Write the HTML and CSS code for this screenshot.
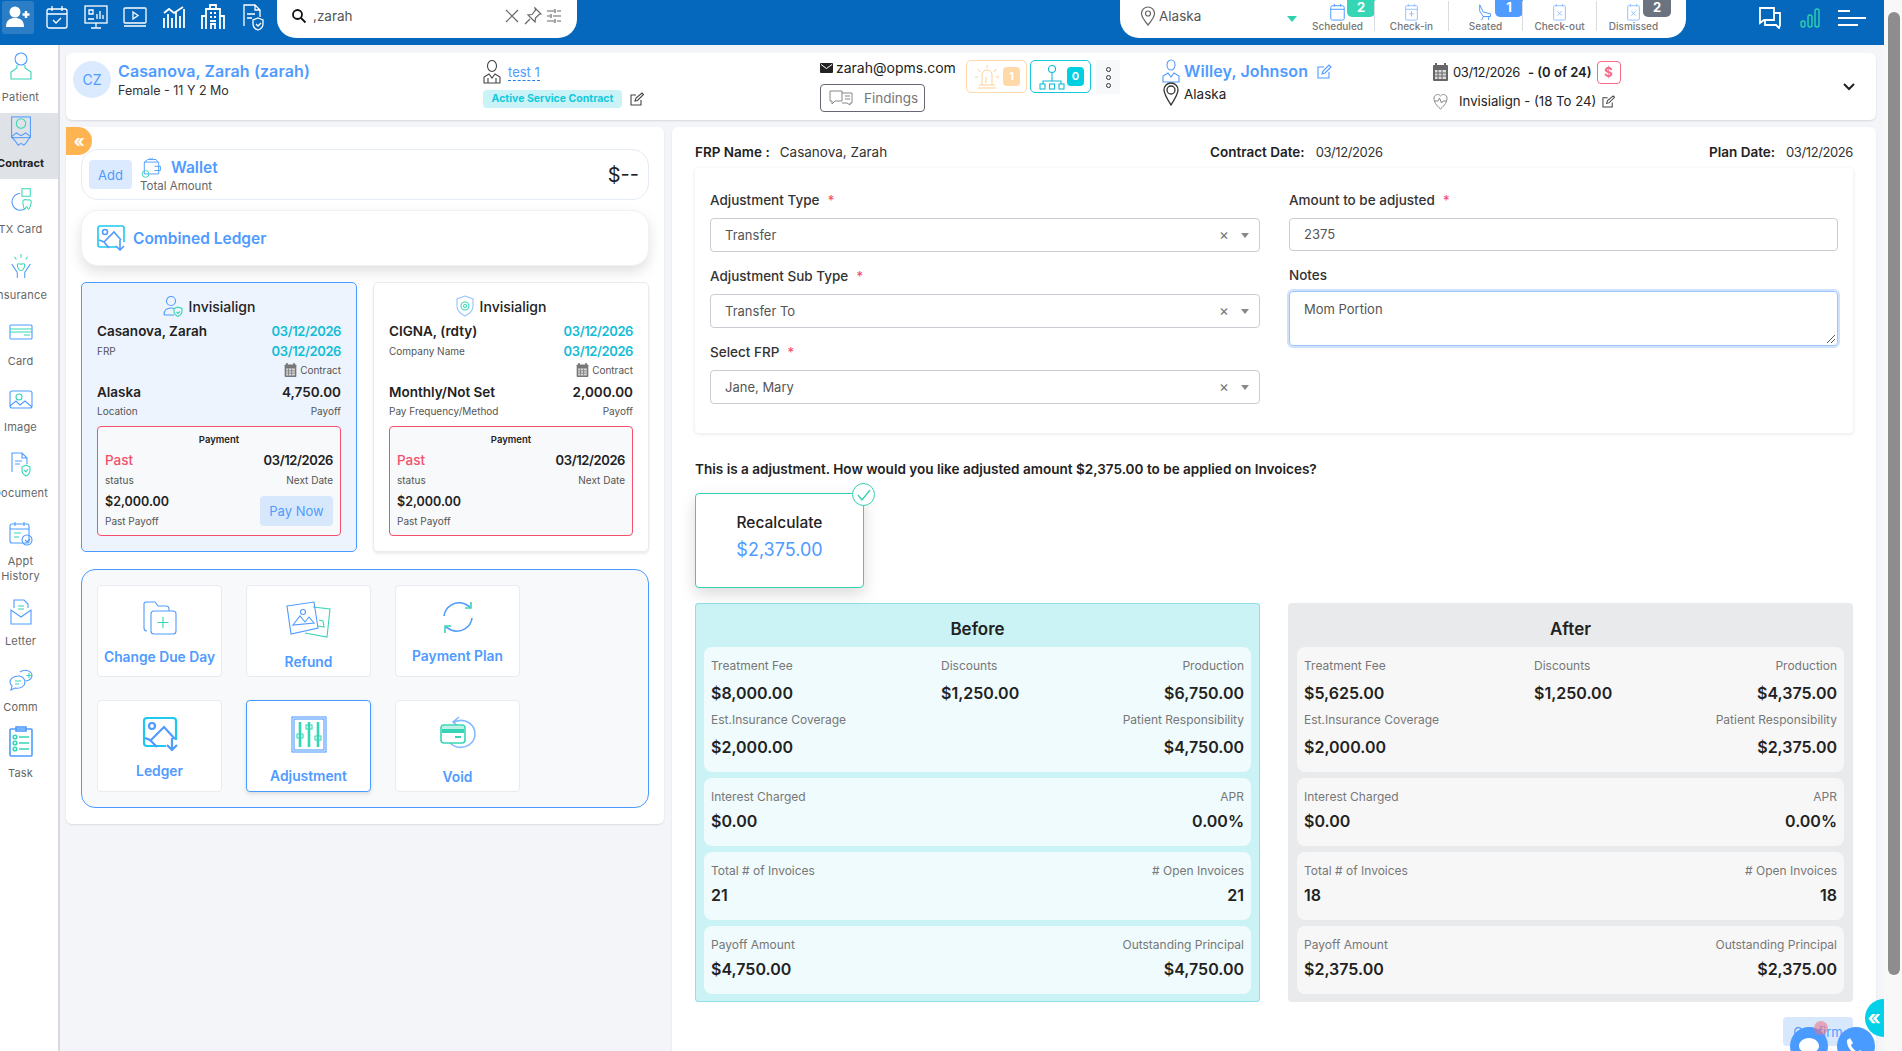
FILE: index.html
```html
<!DOCTYPE html>
<html lang="en">
<head>
<meta charset="utf-8">
<title>Contract Adjustment</title>
<link rel="stylesheet" href="styles.css">
</head>
<body>
<div class="page">
<div class="app">
  <header class="topbar">
    <nav class="quick">
      <a class="quick-btn is-on"><svg width="26" height="24" viewBox="0 0 26 24"><circle cx="10" cy="7" r="5.500" fill="#fff"/><path d="M1 22c0-7 4-9 9-9s9 2 9 9z" fill="#fff"/><path d="M21 6v7M17.500 9.500h7" stroke="#fff" stroke-width="2.400"/></svg></a>
      <a class="quick-btn"><svg width="24" height="24" viewBox="0 0 24 24" class="w"><rect x="2" y="4" width="20" height="19" rx="2"/><path d="M2 9h20M7 1v5M17 1v5M8 15l3 3 5-5"/></svg></a>
      <a class="quick-btn"><svg width="26" height="26" viewBox="0 0 26 26" class="w"><rect x="2" y="2" width="22" height="17"/><path d="M13 19v4M8 24h10M5 15h6M14 15v-5M17 15V7M20 15v-4M6 6h4v4H6z"/></svg></a>
      <a class="quick-btn"><svg width="26" height="24" viewBox="0 0 26 24" class="w"><rect x="2" y="3" width="22" height="15" rx="1"/><path d="M11 7l5 3.500-5 3.500zM2 21h22"/></svg></a>
      <a class="quick-btn"><svg width="24" height="24" viewBox="0 0 24 24" class="w w2"><path d="M2 23V13M6 23V9M10 23V13M14 23V7M18 23V11M22 23V4M2 8l5-4 5 4 9-6"/></svg></a>
      <a class="quick-btn"><svg width="24" height="26" viewBox="0 0 24 26" class="w w2"><path d="M5 25V5h14v20M1 25V12h4M23 25V12h-4M9 9h2M13 9h2M9 13h2M13 13h2M9 17h6M10 25v-5h4v5M9 1h6v4H9z"/></svg></a>
      <a class="quick-btn"><svg width="22" height="28" viewBox="0 0 22 28" class="w"><path d="M2 23V2h11l5 5v7M13 2v5h5M5 11h8M5 15h5"/><path d="M16 15l5 2v4c0 3-2 5-5 6-3-1-5-3-5-6v-4zM14 21l2 2 3-3"/></svg></a>
    </nav>
    <div class="search">
      <svg width="16" height="16" viewBox="0 0 16 16" class="k"><circle cx="6.500" cy="6.500" r="4.500"/><path d="M10 10l4.500 4.500"/></svg>
      <span class="search-text">,zarah</span>
      <svg width="16" height="16" viewBox="0 0 16 16" class="g"><path d="M2 2l12 12M14 2L2 14"/></svg>
      <svg width="18" height="18" viewBox="0 0 18 18" class="g"><path d="M11 1l6 6-2 .5-3.500 3.500-.5 4-7-7 4-.5L11.500 3zM6 12l-5 5"/></svg>
      <svg width="16" height="16" viewBox="0 0 16 16" class="g"><path d="M1 3h7M11 3h4M1 8h3M7 8h8M1 13h7M11 13h4M9 1v4M5 6v4M9 11v4"/></svg>
    </div>
    <div class="status-pill">
      <svg class="loc-pin g" width="16" height="20" viewBox="0 0 16 20"><path d="M8 19C3 13 1.500 10 1.500 7.500a6.500 6.500 0 0 1 13 0C14.500 10 13 13 8 19z"/><circle cx="8" cy="7.500" r="2.500"/></svg>
      <span class="loc">Alaska</span>
      <span class="caret"></span>
      <div class="stat stat-first"><svg width="17" height="18" viewBox="0 0 17 20" class="sb"><rect x="1" y="3" width="15" height="16" rx="2"/><path d="M1 7h15M5 1v3M12 1v3"/></svg><span>Scheduled</span><b class="badge bg-teal">2</b></div>
      <div class="stat"><svg width="17" height="18" viewBox="0 0 17 20" class="sb fade"><rect x="2" y="3" width="13" height="16" rx="1"/><path d="M2 7h13M5 1v3M12 1v3M8.500 9v6M6 12h5"/></svg><span>Check-in</span></div>
      <div class="stat"><svg width="20" height="18" viewBox="0 0 20 20" class="sb"><path d="M3 2l4 8 8 2v3H7L3 9zM7 15l-2 4M13 15v4"/></svg><span>Seated</span><b class="badge bg-blue">1</b></div>
      <div class="stat"><svg width="17" height="18" viewBox="0 0 17 20" class="sb fade"><rect x="2" y="3" width="13" height="16" rx="1"/><path d="M5 1v3M12 1v3M6 9l5 5M11 9l-5 5"/></svg><span>Check-out</span></div>
      <div class="stat"><svg width="17" height="18" viewBox="0 0 17 20" class="sb fade"><rect x="2" y="3" width="13" height="16" rx="1"/><path d="M5 1v3M12 1v3M6 9l5 5M11 9l-5 5"/></svg><span>Dismissed</span><b class="badge bg-gray">2</b></div>
    </div>
    <div class="top-tools">
      <svg width="24" height="22" viewBox="0 0 24 22" class="w w2"><path d="M2 1h14v12H6l-4 3z"/><path d="M16 6h6v12l-1 3-3-3H7v-5"/></svg>
      <svg width="20" height="20" viewBox="0 0 20 20" class="bars"><rect x="1" y="13" width="4" height="6" rx="2"/><rect x="8" y="7" width="4" height="12" rx="2"/><rect x="15" y="1" width="4" height="18" rx="2"/></svg>
      <svg width="28" height="18" viewBox="0 0 28 18" class="w w2"><path d="M0 2h12M0 9h28M0 16h20"/></svg>
    </div>
  </header>

  <div class="body">
    <aside class="sidebar">
      <a class="side"><svg width="24" height="30" viewBox="0 0 24 30" class="sb"><circle cx="12" cy="8" r="6"/><path d="M8 14v3l-6 4v7h20v-7l-6-4v-3" class="st"/></svg><span>Patient</span></a>
      <a class="side is-on"><svg width="24" height="32" viewBox="0 0 24 34" class="sb"><rect x="2" y="1" width="20" height="22"/><circle cx="12" cy="8" r="5" class="st"/><path d="M2 22l5-4 5 3 5-3 5 4-5 7-2 2-3-2-3 2-2-3z"/></svg><b>Contract</b></a>
      <a class="side"><svg width="24" height="26" viewBox="0 0 24 28" class="sb"><path d="M11 7a9 9 0 1 0 6 16" /><path d="M13 2h9v8h-9z" class="st"/><path d="M15 14c2-1 3 0 4 0s4-1 4 2-2 8-3 8-1-3-2-3-1 3-2 3-2-6-2-8 1-2 1-2z" class="st"/></svg><span>TX Card</span></a>
      <a class="side"><svg width="24" height="26" viewBox="0 0 24 28" class="sb"><path d="M2 12l6 9v6M22 12l-6 9v6"/><path d="M8 12c2-1 3 0 4 0s2-1 4 0c0 4-2 7-4 7s-4-3-4-7z" class="st"/><path d="M12 1v4M5 4l2 3M19 4l-2 3" class="st"/></svg><span>Insurance</span></a>
      <a class="side side-card"><svg width="24" height="16" viewBox="0 0 24 16" class="sb"><rect x="1" y="1" width="22" height="14" rx="1"/><path d="M1 5h22M1 8h22M15 11h6" class="st"/></svg><span>Card</span></a>
      <a class="side side-image"><svg width="24" height="19" viewBox="0 0 24 19" class="sb"><rect x="1" y="1" width="22" height="17" rx="2"/><circle cx="10" cy="7" r="3" class="st"/><path d="M1 16l6-5 4 4 5-4 7 6"/></svg><span>Image</span></a>
      <a class="side"><svg width="20" height="25" viewBox="0 0 20 25" class="sb"><path d="M1 20V1h10l5 5v6M11 1v5h5"/><path d="M4 9h7M4 12h5"/><path d="M15 13l4 2v3c0 3-2 5-4 6-2-1-4-3-4-6v-3zM13 18l2 2 2-3" class="st"/></svg><span>Document</span></a>
      <a class="side side-tall"><svg width="24" height="25" viewBox="0 0 24 25" class="sb"><rect x="1" y="3" width="19" height="19" rx="2"/><path d="M1 8h19M6 1v4M15 1v4"/><path d="M5 12h7M5 16h5" class="st"/><circle cx="18" cy="19" r="5"/><path d="M16 19l2 2 3-3"/></svg><span>Appt<br>History</span></a>
      <a class="side"><svg width="22" height="26" viewBox="0 0 22 26" class="sb"><path d="M1 11v14h20V11L11 18zM4 9V1h10l4 4v4"/><path d="M8 7h6M8 10h6" class="st"/></svg><span>Letter</span></a>
      <a class="side"><svg width="24" height="22" viewBox="0 0 24 22" class="sb"><path d="M10 7C4 7 1 10 1 13c0 2 1 3 2 4l-1 4 4-2c6 1 10-2 10-6 0-3-3-6-6-6z"/><path d="M11 3c4-3 11-2 12 3 0 2-1 4-3 5l-3 1"/><path d="M6 12h6M6 15h4M20 4v5M17.500 6.500h5" class="st"/></svg><span>Comm</span></a>
      <a class="side"><svg width="24" height="31" viewBox="0 0 24 31" class="sb sb2"><rect x="1" y="3" width="22" height="27" rx="1"/><rect x="7" y="1" width="10" height="4"/><circle cx="6" cy="11" r="1.800" class="st"/><circle cx="6" cy="17" r="1.800" class="st"/><circle cx="6" cy="23" r="1.800" class="st"/><path d="M10 11h10M10 17h10M10 23h10" class="st"/></svg><span>Task</span></a>
    </aside>

    <main class="main">
      <section class="patient">
        <div class="who">
          <div class="avatar">CZ</div>
          <div>
            <div class="name">Casanova, Zarah (zarah)</div>
            <div class="sub">Female - 11 Y 2 Mo</div>
          </div>
        </div>
        <div class="doctor">
          <div class="doc-top"><svg width="18" height="24" viewBox="0 0 18 24" class="d"><ellipse cx="9" cy="6" rx="4.500" ry="5.500"/><path d="M1 23v-6l5-3 3 4 3-4 5 3v6zM5 18v5M13 18v5"/></svg><a class="test">test 1</a></div>
          <div class="doc-bottom"><span class="service">Active Service Contract</span><svg width="14" height="14" viewBox="0 0 14 14" class="d"><path d="M11 8v5H1V3h5M5 9l1-3 6-5 1.500 1.500-6 6z"/></svg></div>
        </div>
        <div class="contact">
          <div class="mail"><svg width="13" height="10" viewBox="0 0 13 10"><rect width="13" height="10" rx="1" fill="#222"/><path d="M1 1.500l5.500 4 5.500-4" stroke="#fff" fill="none"/></svg>zarah@opms.com</div>
          <button class="findings"><svg width="24" height="16" viewBox="0 0 24 16" class="g2"><path d="M1 1h12v10H6l-3 3v-3H1zM13 3h10v10h-2v2l-3-2h-5M16 6h5M16 9h5"/></svg>Findings</button>
        </div>
        <div class="alerts">
          <div class="alert alert-o"><svg width="24" height="28" viewBox="0 0 24 28" class="o"><path d="M7 22V12a5 5 0 0 1 10 0v10M3 25h18M4 22h16M12 2v3M3 6l2 3M21 6l-2 3M0 14h3M21 14h3M11 14v6"/></svg><b>1</b></div>
          <div class="alert alert-t"><svg width="26" height="26" viewBox="0 0 26 26" class="c"><circle cx="13" cy="5" r="3.500"/><path d="M13 9v8M4 20v-3h18v3"/><rect x="1" y="20" width="5" height="5"/><rect x="10.500" y="20" width="5" height="5"/><rect x="20" y="20" width="5" height="5"/></svg><b>0</b></div>
          <button class="dots"><i></i><i></i><i></i></button>
        </div>
        <div class="provider">
          <div class="prov-row"><svg width="18" height="24" viewBox="0 0 18 24" class="sb"><ellipse cx="9" cy="6" rx="4" ry="5"/><path d="M1 23v-6l5-3 3 4 3-4 5 3v6z"/></svg><span class="name">Willey, Johnson</span><svg class="prov-edit sb" width="15" height="15" viewBox="0 0 15 15"><path d="M12 8v6H1V3h6M5 10l1-3 6-6 2 2-6 6z"/></svg></div>
          <div class="prov-row prov-loc"><svg width="18" height="24" viewBox="0 0 18 24" class="k2"><path d="M9 23C4 15 2 12 2 8a7 7 0 0 1 14 0c0 4-2 7-7 15z"/><circle cx="9" cy="8" r="4"/></svg><span>Alaska</span></div>
        </div>
        <div class="plan">
          <div class="plan-row"><svg width="15" height="18" viewBox="0 0 15 18"><rect y="2" width="15" height="16" rx="1" fill="#666"/><rect x="2" y="7" width="11" height="9" fill="#ddd"/><path d="M3 0v3M12 0v3" stroke="#666" stroke-width="2"/><path d="M5 7v9M9 7v9M2 10h11M2 13h11" stroke="#666"/></svg><span class="date">03/12/2026</span><b>- (0 of 24)</b><span class="dollar">$</span></div>
          <div class="plan-row plan-row2"><svg width="15" height="18" viewBox="0 0 15 18" class="g2"><path d="M7.500 17C3 13 1 10 1 6c0-3 4-5 6.500-2C10 1 14 3 14 6c0 4-2 7-6.500 11zM1 9h4l1.500-3 2 5L10 9h4"/></svg><span class="plan-name">Invisialign - (18 To 24)</span><svg width="13" height="13" viewBox="0 0 14 14" class="d"><path d="M11 8v5H1V3h5M5 9l1-3 6-5 1.500 1.500-6 6z"/></svg></div>
        </div>
        <svg class="chev" width="12" height="8" viewBox="0 0 12 8"><path d="M1 1l5 5 5-5" fill="none" stroke="#222" stroke-width="2"/></svg>
      </section>

      <div class="columns">
        <section class="left">
          <button class="collapse">«</button>
          <div class="wallet">
            <button class="add">Add</button>
            <div class="wallet-text">
              <div class="wallet-top"><svg width="23" height="22" viewBox="0 0 23 26" class="sb"><path d="M3 6h17v14H3zM3 6l4-3h10l2 3M15 11h7v5h-7M9 1l2 2 2-2"/><circle cx="4.500" cy="20" r="4" class="st"/></svg><span class="wallet-title">Wallet</span></div>
              <div class="wallet-sub">Total Amount</div>
            </div>
            <div class="wallet-amt">$--</div>
          </div>
          <div class="combined">
            <svg width="28" height="26" viewBox="0 0 28 26" class="sb sb2"><path d="M20 22H3a2 2 0 0 1-2-2V3a2 2 0 0 1 2-2h22a2 2 0 0 1 2 2v14" class="cy"/><circle cx="8" cy="7" r="2.500"/><path d="M2 15l5 2 5 6M7 17l10-10 7 8M23 15v10M19 21l4 4 4-4"/></svg>
            <span>Combined Ledger</span>
          </div>
          <div class="cards">
            <article class="card card-active">
              <h3 class="card-head"><svg width="20" height="22" viewBox="0 0 20 22" class="sb"><circle cx="8" cy="6" r="4.500"/><path d="M1 20c0-5 3-7 7-7 1 0 2 0 3 .5M1 20h10"/><path d="M15 12l4 1.500v3c0 2-2 4-4 5-2-1-4-3-4-5v-3zM13.500 17l1.500 1.500 2-2" class="st"/></svg>Invisialign</h3>
              <div class="line"><b class="big">Casanova, Zarah</b><b class="tdate">03/12/2026</b></div>
              <div class="line"><span class="tiny">FRP</span><b class="tdate">03/12/2026</b></div>
              <div class="line line-c"><span></span><span class="tiny contract-tag"><svg width="13" height="14" viewBox="0 0 15 18"><rect y="2" width="15" height="16" rx="1" fill="#777"/><rect x="2" y="7" width="11" height="9" fill="#ddd"/><path d="M3 0v3M12 0v3" stroke="#777" stroke-width="2"/><path d="M5 7v9M9 7v9M2 10h11M2 13h11" stroke="#777"/></svg>Contract</span></div>
              <div class="line line-d"><b class="big">Alaska</b><b class="big">4,750.00</b></div>
              <div class="line line-e"><span class="tiny">Location</span><span class="tiny">Payoff</span></div>
              <div class="pay">
                <div class="pay-title">Payment</div>
                <div class="line"><b class="past">Past</b><b class="big pdate">03/12/2026</b></div>
                <div class="line line-s"><span class="tiny">status</span><span class="tiny">Next Date</span></div>
                <div class="pay-foot">
                  <div><div class="amt">$2,000.00</div><div class="tiny">Past Payoff</div></div>
                  <button class="paynow">Pay Now</button>
                </div>
              </div>
            </article>
            <article class="card">
              <h3 class="card-head"><svg width="18" height="22" viewBox="0 0 18 22" class="sb"><path d="M9 1l8 3v7c0 5-4 8-8 10-4-2-8-5-8-10V4z" opacity=".6"/><circle cx="9" cy="11" r="4" class="st"/><circle cx="9" cy="11" r="1.500" class="st"/></svg>Invisialign</h3>
              <div class="line"><b class="big">CIGNA, (rdty)</b><b class="tdate">03/12/2026</b></div>
              <div class="line"><span class="tiny">Company Name</span><b class="tdate">03/12/2026</b></div>
              <div class="line line-c"><span></span><span class="tiny contract-tag"><svg width="13" height="14" viewBox="0 0 15 18"><rect y="2" width="15" height="16" rx="1" fill="#777"/><rect x="2" y="7" width="11" height="9" fill="#ddd"/><path d="M3 0v3M12 0v3" stroke="#777" stroke-width="2"/><path d="M5 7v9M9 7v9M2 10h11M2 13h11" stroke="#777"/></svg>Contract</span></div>
              <div class="line line-d"><b class="big">Monthly/Not Set</b><b class="big">2,000.00</b></div>
              <div class="line line-e"><span class="tiny">Pay Frequency/Method</span><span class="tiny">Payoff</span></div>
              <div class="pay">
                <div class="pay-title">Payment</div>
                <div class="line"><b class="past">Past</b><b class="big pdate">03/12/2026</b></div>
                <div class="line line-s"><span class="tiny">status</span><span class="tiny">Next Date</span></div>
                <div class="pay-foot">
                  <div><div class="amt">$2,000.00</div><div class="tiny">Past Payoff</div></div>
                </div>
              </div>
            </article>
          </div>
          <div class="actions">
            <a class="tile"><svg class="sb m12" width="34" height="34" viewBox="0 0 34 34"><path d="M4 30a3 3 0 0 1-3-3V3a2 2 0 0 1 2-2h9l3 4h8a3 3 0 0 1 3 3v2"/><rect x="8" y="10" width="25" height="23" rx="3"/><path d="M20 16v11M14.500 21.500h11" class="st"/></svg><span>Change Due Day</span></a>
            <a class="tile"><svg class="sb m14" width="45" height="37" viewBox="0 0 45 37"><path d="M27 6l17 2-3 28-22-4" class="st"/><path d="M1 5l27-4 4 26-27 6z"/><path d="M7 24l7-9 5 6 4-5 5 6z"/><circle cx="17" cy="11" r="2.500"/><path d="M33 19l4 1 1 6-6-1" class="st"/></svg><span>Refund</span></a>
            <a class="tile"><svg class="sb sb2 m12" width="34" height="33" viewBox="0 0 34 33"><path d="M3 15C4 6 14 -1 24 3l5 3"/><path d="M31 17c-1 9-11 16-21 12l-5-3"/><path d="M30 1v6h-6M4 32v-7h6" class="st"/></svg><span>Payment Plan</span></a>
            <a class="tile"><svg class="sb sb3 m10" width="36" height="35" viewBox="0 0 36 35"><path d="M24 30H5a3 3 0 0 1-3-3V5a3 3 0 0 1 3-3h26a3 3 0 0 1 3 3v19" class="cy"/><circle cx="10" cy="10" r="3"/><path d="M3 22l5 2 7 7M9 24l13-13 11 12M30 22v12M25 29l5 5 5-5"/></svg><span>Ledger</span></a>
            <a class="tile tile-on"><svg class="sb m13" width="36" height="37" viewBox="0 0 36 37"><rect x="1" y="1" width="34" height="35"/><rect x="3" y="3" width="30" height="31"/><path d="M9 6v25M18 6v25M27 6v25" class="st st3"/><path d="M6 18h6v4H6zM15 9h6v4h-6zM24 20h6v4h-6z" class="st"/></svg><span>Adjustment</span></a>
            <a class="tile"><svg class="sb sb2 m16" width="36" height="34" viewBox="0 0 36 34"><path d="M14 6c12-5 21 3 21 12 0 9-9 15-18 13-4-1-6-3-8-5" opacity=".7"/><path d="M19 1l-6 5 6 5" opacity=".7"/><rect x="1" y="9" width="24" height="18" rx="3" fill="#fff" class="st"/><rect x="2" y="13" width="22" height="4" fill="#38d3b6" stroke="none"/><rect x="2" y="10" width="22" height="3" fill="#bff0e6" stroke="none"/><rect x="15" y="20" width="6" height="2" fill="#38d3b6" stroke="none"/></svg><span>Void</span></a>
          </div>
        </section>

        <section class="right">
          <div class="meta">
            <div><b>FRP Name :</b><span class="frp">Casanova, Zarah</span></div>
            <div class="meta-mid"><b>Contract Date:</b><span class="date">03/12/2026</span></div>
            <div class="meta-end"><b>Plan Date:</b><span class="date">03/12/2026</span></div>
          </div>
          <div class="form">
            <div class="form-col">
              <div class="field">
                <label>Adjustment Type<i>*</i></label>
                <div class="select">Transfer<span class="x">×</span><span class="tri"></span></div>
              </div>
              <div class="field">
                <label>Adjustment Sub Type<i>*</i></label>
                <div class="select">Transfer To<span class="x">×</span><span class="tri"></span></div>
              </div>
              <div class="field">
                <label>Select FRP<i>*</i></label>
                <div class="select">Jane, Mary<span class="x">×</span><span class="tri"></span></div>
              </div>
            </div>
            <div class="form-col">
              <div class="field field-r">
                <label>Amount to be adjusted<i>*</i></label>
                <div class="input">2375</div>
              </div>
              <div class="field field-n">
                <label>Notes</label>
                <div class="textarea">Mom Portion<svg width="10" height="10" viewBox="0 0 10 10"><path d="M9 1L1 9M9 5L5 9" stroke="#555"/></svg></div>
              </div>
            </div>
          </div>
          <p class="question">This is a adjustment. How would you like adjusted amount $2,375.00 to be applied on Invoices?</p>
          <div class="recalc">
            <span class="check"><svg width="14" height="12" viewBox="0 0 14 12"><path d="M1 6l4 5 8-10" fill="none" stroke="#35d0b0" stroke-width="1.300"/></svg></span>
            <div class="recalc-t">Recalculate</div>
            <div class="recalc-v">$2,375.00</div>
          </div>
          <div class="compare">
            <div class="side-panel before">
              <h2>Before</h2>
              <div class="box box-main">
                <span class="lab">Treatment Fee</span><span class="lab">Discounts</span><span class="lab r">Production</span>
                <b class="val">$8,000.00</b><b class="val">$1,250.00</b><b class="val r">$6,750.00</b>
                <span class="lab">Est.Insurance Coverage</span><span></span><span class="lab r">Patient Responsibility</span>
                <b class="val">$2,000.00</b><span></span><b class="val r">$4,750.00</b>
              </div>
              <div class="box"><span class="lab">Interest Charged</span><span class="lab r">APR</span><b class="val">$0.00</b><b class="val r">0.00%</b></div>
              <div class="box"><span class="lab">Total # of Invoices</span><span class="lab r"># Open Invoices</span><b class="val">21</b><b class="val r">21</b></div>
              <div class="box"><span class="lab">Payoff Amount</span><span class="lab r">Outstanding Principal</span><b class="val">$4,750.00</b><b class="val r">$4,750.00</b></div>
            </div>
            <div class="side-panel after">
              <h2>After</h2>
              <div class="box box-main">
                <span class="lab">Treatment Fee</span><span class="lab">Discounts</span><span class="lab r">Production</span>
                <b class="val">$5,625.00</b><b class="val">$1,250.00</b><b class="val r">$4,375.00</b>
                <span class="lab">Est.Insurance Coverage</span><span></span><span class="lab r">Patient Responsibility</span>
                <b class="val">$2,000.00</b><span></span><b class="val r">$2,375.00</b>
              </div>
              <div class="box"><span class="lab">Interest Charged</span><span class="lab r">APR</span><b class="val">$0.00</b><b class="val r">0.00%</b></div>
              <div class="box"><span class="lab">Total # of Invoices</span><span class="lab r"># Open Invoices</span><b class="val">18</b><b class="val r">18</b></div>
              <div class="box"><span class="lab">Payoff Amount</span><span class="lab r">Outstanding Principal</span><b class="val">$2,375.00</b><b class="val r">$2,375.00</b></div>
            </div>
          </div>
          <div class="confirm-row"><button class="confirm">Confirm</button></div>
        </section>
      </div>
    </main>
    <button class="float-teal">«</button>
    <span class="float-chat"><svg width="24" height="22" viewBox="0 0 24 22"><path d="M12 2C6 2 2 6 2 10c0 2 1 4 3 5l-1 5 5-3h3c6 0 10-3 10-7s-4-8-10-8z" fill="#fff"/></svg></span>
    <span class="float-dot"></span>
    <span class="float-call"><svg width="22" height="22" viewBox="0 0 22 22"><path d="M5 2l3 5-2 2c1 3 4 6 7 7l2-2 5 3-2 3C10 21 1 12 2 4z" fill="#fff"/></svg></span>
  </div>
</div>
<div class="rail"><div class="thumb"></div></div>
</div>
</body>
</html>
```
FILE: styles.css
```css
* { box-sizing: border-box; }
html, body { margin: 0; height: 100%; overflow: hidden; }
body { font-family: Inter, "Liberation Sans", sans-serif; font-size: 13px; color: #222; background: #f4f5f9; }
svg { display: block; flex: none; fill: none; }
button { font: inherit; border: 0; padding: 0; }
h2, h3, p { margin: 0; }
.page { display: flex; height: 1051px; }
.app { width: 1884px; height: 1051px; display: flex; flex-direction: column; overflow: hidden; }
.rail { width: 18px; background: #f8f8f8; padding: 12px 2px 0 4px; }
.thumb { height: 963px; border-radius: 6px; background: #8d8d8d; }

.sb { stroke: #4f9bff; stroke-width: 1.100; }
.sb .st { stroke: #35d6b5; }
.sb .cy { stroke: #1dc9ef; }
.sb2 { stroke-width: 1.600; }
.sb3 { stroke-width: 2.200; }
.sb .st3 { stroke-width: 2.600; }
.fade { opacity: .6; }
.w { stroke: #fff; stroke-width: 1.300; }
.w2 { stroke-width: 1.800; }
.k { stroke: #111; stroke-width: 1.800; }
.g { stroke: #666; stroke-width: 1.200; }
.g2 { stroke: #888; stroke-width: 1; }
.d { stroke: #444; stroke-width: 1.100; }
.k2 { stroke: #333; stroke-width: 1.300; }
.o { stroke: #ffcf96; stroke-width: 1; }
.c { stroke: #14bcd6; stroke-width: 1.100; }
.bars { stroke: #2fd1ad; stroke-width: 1.400; }

/* top bar */
.topbar { height: 45px; flex: none; background: #0668bd; display: flex; align-items: flex-start; }
.quick { width: 277px; height: 34px; padding-left: 2px; display: flex; align-items: center; }
.quick-btn { width: 39.200px; height: 33px; display: flex; align-items: center; justify-content: center; border-radius: 3px; }
.quick-btn.is-on { width: 32px; margin-right: 3px; background: #2b7dc6; }
.search { width: 300px; height: 38px; background: #fff; border-radius: 0 0 19px 19px; display: flex; align-items: center; padding: 0 15px 6px 14px; gap: 4px; color: #555; }
.search-text { flex: 1; font-size: 13.500px; padding-left: 2px; }
.status-pill { margin-left: 543px; width: 566px; height: 38px; background: #fff; border-radius: 0 0 19px 19px; display: flex; align-items: center; padding-left: 20px; color: #555; }
.loc-pin { margin-top: -6px; }
.loc { width: 131px; padding-left: 3px; font-size: 13.500px; margin-top: -6px; }
.caret { width: 0; height: 0; border: 5px solid transparent; border-top: 6px solid #2fd1ad; border-bottom: 0; margin-right: 3px; }
.stat { position: relative; width: 74px; display: flex; flex-direction: column; align-items: center; border-left: 1px solid #d9dde2; height: 30px; font-size: 10px; font-weight: 500; color: #777; margin-top: -6px; padding-top: 2px; line-height: 11px; align-self: flex-start; margin-top: 1px; }
.stat-first { border-left-color: transparent; }
.badge { position: absolute; left: 46px; top: -1px; width: 28px; height: 17px; border-radius: 0 0 5px 5px; color: #fff; font-size: 13px; line-height: 15px; text-align: center; }
.bg-teal { background: #35d6b5; }
.bg-blue { background: #4f9bff; }
.bg-gray { background: #6b7280; }
.top-tools { margin-left: 72px; width: 107px; height: 36px; display: flex; align-items: center; gap: 18px; }

/* body */
.body { position: relative; flex: 1; display: flex; min-height: 0; }
.sidebar { width: 60px; flex: none; padding-top: 2px; background: #fff; border-right: 2px solid #d7d9df; display: flex; flex-direction: column; overflow: hidden; }
.side { height: 66px; flex: none; display: flex; flex-direction: column; align-items: center; justify-content: flex-end; padding: 0 17px 9px 0; gap: 9px; font-size: 11px; color: #666; white-space: nowrap; letter-spacing: .2px; }
.side.is-on { background: #dfe3e7; color: #222; font-size: 11px; gap: 8px; letter-spacing: 0; }
.side-card { gap: 14px; }
.side-image { gap: 11px; }
.side-tall { height: 82px; padding-bottom: 7px; gap: 8px; text-align: center; line-height: 15px; }

.main { flex: 1; padding: 8px 8px 0 6px; display: flex; flex-direction: column; min-width: 0; }
.patient { height: 67px; flex: none; background: #fff; border-radius: 6px; box-shadow: 0 1px 2px rgba(0,0,0,.12); display: grid; grid-template-columns: 410px 337px 146px 196px 271px 410px 20px; align-items: start; padding-left: 7px; }
.who { display: flex; gap: 7px; padding-top: 8px; }
.avatar { width: 38px; height: 37px; border-radius: 50%; background: #dbeafe; color: #4f9bff; font-size: 14px; display: flex; align-items: center; justify-content: center; }
.name { font-size: 16px; font-weight: 600; color: #4f9bff; line-height: 20px; letter-spacing: .1px; }
.sub { font-size: 12.500px; line-height: 20px; color: #333; }
.doctor { padding-top: 7px; }
.doc-top { display: flex; gap: 7px; align-items: center; height: 24px; }
.test { color: #4f9bff; font-size: 13px; border-bottom: 1px dashed #2680f0; line-height: 15px; margin-top: 2px; }
.doc-bottom { display: flex; align-items: center; gap: 8px; margin-top: 6px; }
.service { width: 139px; height: 18px; background: #c9f3f6; color: #14c8dc; font-size: 10.500px; font-weight: 700; border-radius: 4px; line-height: 18px; text-align: center; }
.contact { padding-top: 6px; }
.mail { display: flex; align-items: center; gap: 3px; font-size: 14px; line-height: 18px; height: 18px; }
.findings { margin-top: 7px; width: 105px; height: 28px; border: 1px solid #667; border-radius: 4px; background: #fff; color: #777; font-size: 13.500px; display: flex; align-items: center; gap: 11px; padding-left: 8px; }
.alerts { display: flex; gap: 3px; padding-top: 7px; }
.alert { width: 61px; height: 33px; border-radius: 5px; display: flex; align-items: center; justify-content: space-between; padding: 0 6px 0 8px; background: #fff; }
.alert b { width: 17px; height: 19px; border-radius: 4px; color: #fff; font-size: 11px; text-align: center; line-height: 19px; }
.alert-o { border: 1px solid #ffd9a8; }
.alert-o b { background: #ffd9a8; }
.alert-t { border: 1px solid #14c8dc; }
.alert-t b { background: #00cfe0; }
.dots { width: 24px; height: 34px; margin-left: 2px; background: #f7f8fa; display: flex; flex-direction: column; align-items: center; justify-content: center; gap: 3px; }
.dots i { width: 5px; height: 5px; border-radius: 50%; border: 1.500px solid #333; }
.provider { padding-top: 7px; }
.prov-row { display: flex; align-items: center; gap: 4px; height: 22px; }
.prov-edit { margin-left: 5px; }
.prov-loc { margin-top: 1px; font-size: 13.500px; }
.plan { padding-top: 7px; }
.plan-row { display: flex; align-items: center; gap: 5px; height: 24px; font-size: 13px; }
.plan-row b { font-weight: 600; margin-left: 3px; }
.dollar { width: 24px; height: 23px; border: 1px solid #f86a85; border-radius: 4px; color: #f86a85; font-weight: 700; text-align: center; line-height: 21px; }
.plan-row2 { margin-top: 5px; gap: 6px; }
.plan-name { margin-left: 5px; font-size: 13.200px; }
.chev { margin-top: 30px; }
.date { letter-spacing: -.4px; }

.columns { flex: 1; display: flex; gap: 8px; margin-top: 7px; min-height: 0; }
.left { position: relative; width: 598px; flex: none; height: 697px; background: #fff; border-radius: 6px; box-shadow: 0 1px 2px rgba(0,0,0,.1); padding: 22px 15px 16px; display: flex; flex-direction: column; }
.collapse { position: absolute; left: 0; top: 0; width: 26px; height: 28px; background: #ffb452; color: #fff; font-size: 17px; font-weight: 700; line-height: 22px; border-radius: 0 14px 14px 0; }
.wallet { height: 51px; flex: none; border: 1px solid #e6ecf3; border-radius: 17px; background: #fff; display: flex; align-items: center; padding: 0 9px 0 7px; gap: 8px; }
.add { width: 43px; height: 29px; background: #dbeafe; color: #4f9bff; border-radius: 4px; font-size: 13px; }
.wallet-text { flex: 1; padding-top: 1px; }
.wallet-top { display: flex; align-items: center; gap: 8px; height: 22px; }
.wallet-title { font-size: 15.500px; font-weight: 600; color: #4f9bff; line-height: 22px; }
.wallet-sub { font-size: 11.500px; color: #666; line-height: 14px; }
.wallet-amt { font-size: 20px; color: #222; }
.combined { height: 56px; flex: none; margin-top: 10px; border-radius: 17px; background: #fff; border: 1px solid #eef1f5; box-shadow: 0 6px 14px rgba(0,0,0,.12); display: flex; align-items: center; gap: 8px; padding-left: 15px; font-size: 15.500px; font-weight: 600; color: #4f9bff; }
.cards { margin-top: 16px; display: grid; grid-template-columns: 276px 276px; gap: 16px; flex: none; }
.card { height: 270px; padding: 13px 15px 0; border: 1px solid #e8ecf1; border-radius: 5px; background: #fff; box-shadow: 0 2px 3px rgba(0,0,0,.08); }
.card-active { border-color: #4a9bff; background: #edf4fd; box-shadow: none; }
.card-head { height: 20px; display: flex; justify-content: center; align-items: center; gap: 6px; font-size: 14px; font-weight: 500; margin-bottom: 5px; padding-right: 20px; }
.line { display: flex; justify-content: space-between; align-items: center; height: 20px; }
.line-c { height: 18px; }
.line-d { margin-top: 3px; }
.line-e { height: 18px; }
.line-s { height: 18px; margin-top: 1px; }
.big { font-size: 13.500px; font-weight: 600; }
.tdate { font-size: 13px; font-weight: 600; color: #14bcd6; letter-spacing: -.4px; }
.pdate { font-size: 13px; letter-spacing: -.4px; }
.tiny { font-size: 10px; color: #555; line-height: 18px; }
.contract-tag { display: flex; align-items: center; gap: 3px; }
.pay { margin-top: 6px; height: 110px; border: 1px solid #f44f6b; border-radius: 4px; background: #f7f9fb; padding: 6px 7px 0; }
.pay-title { font-size: 9.500px; font-weight: 600; text-align: center; line-height: 14px; margin-bottom: 3px; }
.past { font-size: 13.500px; font-weight: 500; color: #f44f6b; }
.pay-foot { display: flex; justify-content: space-between; margin-top: 3px; }
.amt { font-size: 12.500px; font-weight: 600; line-height: 20px; }
.paynow { width: 73px; height: 30px; background: #d7e8fd; color: #4f9bff; border-radius: 4px; font-size: 13px; margin-top: 4px; }
.actions { margin-top: 17px; height: 239px; flex: none; border: 1px solid #4a9bff; border-radius: 14px; background: #f7f9fb; padding: 15px; display: grid; grid-template-columns: repeat(3, 125px); grid-auto-rows: 92px; column-gap: 24px; row-gap: 23px; }
.tile { background: #fff; border: 1px solid #e8ebf0; border-radius: 4px; display: flex; flex-direction: column; align-items: center; padding-top: 15px; font-size: 13.800px; font-weight: 600; color: #4f9bff; line-height: 20px; }
.tile-on { border-color: #4a9bff; box-shadow: 0 2px 4px rgba(0,0,0,.12); }
.m10 { margin-bottom: 10px; }
.m12 { margin-bottom: 12px; }
.m13 { margin-bottom: 13px; }
.m14 { margin-bottom: 14px; }
.m16 { margin-bottom: 17px; }

.right { flex: 1; background: #fff; border-radius: 6px 6px 0 0; box-shadow: 0 1px 2px rgba(0,0,0,.1); padding: 15px 23px 0; min-width: 0; }
.meta { display: grid; grid-template-columns: 515px 1fr auto; height: 20px; line-height: 20px; font-size: 13px; color: #333; }
.meta b { font-size: 13.500px; font-weight: 600; color: #222; margin-right: 11px; }
.frp { font-size: 13.500px; margin-left: -1px; }
.form { margin-top: 6px; height: 265px; padding: 22px 15px 0; border-radius: 4px; box-shadow: 0 1px 4px rgba(0,0,0,.1); display: grid; grid-template-columns: 550px 549px; column-gap: 29px; }
.field { height: 76px; }
.field label { display: block; font-size: 13.500px; line-height: 20px; font-weight: 500; margin-bottom: 8px; color: #333; }
.field label i { color: #f44f6b; font-style: normal; margin-left: 8px; }
.select, .input { position: relative; height: 34px; border: 1px solid #c8cdd3; border-radius: 4px; padding-left: 14px; line-height: 32px; color: #555; font-size: 13px; }
.input { height: 33px; line-height: 31px; }
.x { position: absolute; right: 30px; top: 0; font-size: 15px; color: #777; }
.tri { position: absolute; right: 10px; top: 14px; width: 0; height: 0; border: 4px solid transparent; border-top: 5px solid #888; border-bottom: 0; }
.field-r { height: 75px; }
.field-n label { margin-bottom: 6px; }
.textarea { position: relative; height: 55px; border: 1px solid #9ec5fa; box-shadow: 0 0 0 2px #cfe2fd; border-radius: 4px; padding: 7px 14px; line-height: 20px; color: #555; font-size: 13px; }
.textarea svg { position: absolute; right: 1px; bottom: 1px; }
.question { margin-top: 26px; line-height: 20px; font-size: 13.550px; font-weight: 600; color: #222; }
.recalc { position: relative; margin-top: 14px; width: 169px; height: 95px; border: 1px solid #35d0b0; border-radius: 4px; background: #fff; box-shadow: 0 6px 16px rgba(0,0,0,.15); text-align: center; padding-top: 17px; }
.recalc-t { font-size: 15.500px; font-weight: 500; line-height: 24px; color: #222; }
.recalc-v { font-size: 18px; color: #4f9bff; line-height: 26px; margin-top: 2px; }
.check { position: absolute; right: -12px; top: -11px; width: 23px; height: 23px; border: 1.500px solid #35d0b0; border-radius: 50%; background: #fff; display: flex; align-items: center; justify-content: center; }
.compare { margin-top: 15px; display: grid; grid-template-columns: 565px 565px; column-gap: 28px; }
.side-panel { height: 399px; padding: 14px 9px 0; border-radius: 4px; display: flex; flex-direction: column; gap: 6px; }
.side-panel h2 { font-size: 17px; font-weight: 600; text-align: center; line-height: 24px; color: #222; }
.before { background: #cbf2f5; box-shadow: inset 0 0 0 1px #8fe0e6; }
.after { background: #e9eaec; }
.box { height: 68px; flex: none; border-radius: 8px; padding: 10px 7px 0; display: grid; grid-template-columns: 1fr auto; grid-template-rows: 18px 26px; row-gap: 2px; }
.before .box { background: #effbfc; }
.after .box { background: #f7f7f8; }
.box-main { height: 125px; padding-top: 10px; grid-template-columns: 230px 1fr auto; grid-template-rows: 18px 26px 18px 26px; row-gap: 5px; }
.lab { font-size: 12px; line-height: 18px; color: #777; }
.val { font-size: 16px; font-weight: 600; line-height: 26px; color: #222; }
.r { text-align: right; }
.confirm-row { display: flex; justify-content: flex-end; margin-top: 15px; }
.confirm { width: 70px; height: 29px; background: #d7e8fd; color: #4f9bff; border-radius: 4px; font-size: 13px; }

.float-teal { position: absolute; right: -19px; top: 954px; width: 38px; height: 38px; border-radius: 50%; background: #00d0e8; color: #fff; font-size: 20px; font-weight: 700; line-height: 34px; padding-right: 20px; }
.float-chat, .float-call { position: absolute; top: 982px; width: 38px; height: 38px; border-radius: 50%; background: #4a9bff; display: flex; justify-content: center; padding-top: 9px; }
.float-chat { left: 1790px; }
.float-call { left: 1837px; }
.float-dot { position: absolute; left: 1814px; top: 976px; width: 14px; height: 14px; border-radius: 50%; background: rgba(240,110,130,.55); z-index: 2; }
```
